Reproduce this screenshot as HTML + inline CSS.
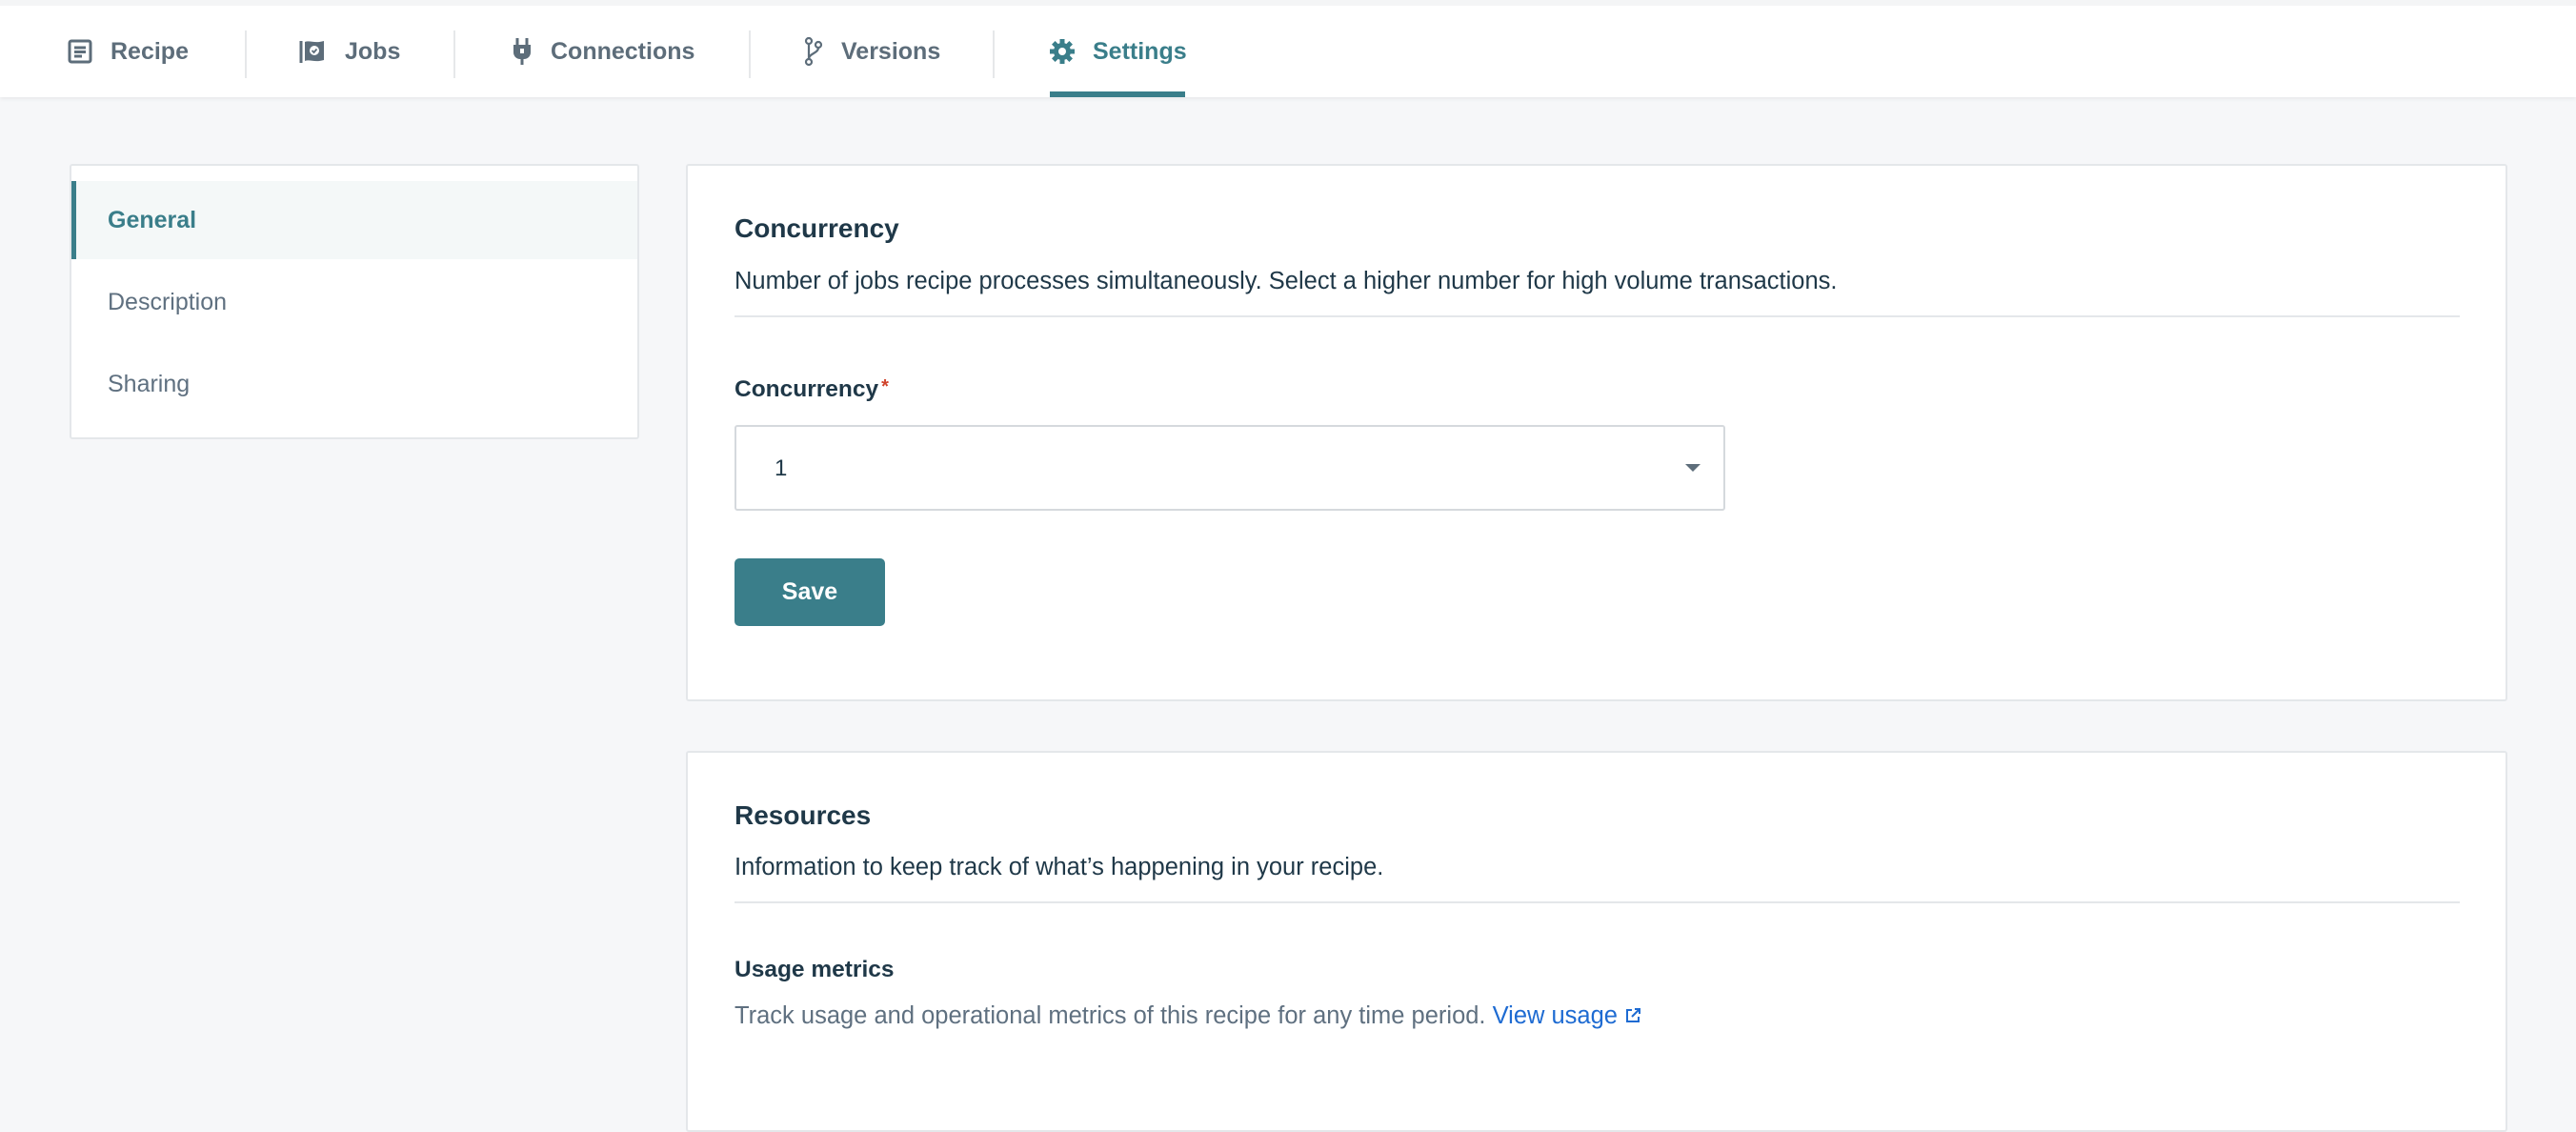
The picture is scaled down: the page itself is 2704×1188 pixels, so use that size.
<!DOCTYPE html>
<html><head><meta charset="utf-8"><style>
*{box-sizing:border-box;margin:0;padding:0}
body{width:2704px;height:1154px;overflow:hidden;background:#f6f7f9;font-family:"Liberation Sans",sans-serif;color:#1f3848;position:relative}
.nav{position:absolute;left:0;top:0;width:2704px;height:102px;background:#fff;box-shadow:0 2px 4px rgba(0,0,0,.06);border-top:6px solid #f4f5f6}
.ni{position:absolute;top:0;height:96px;display:flex;align-items:center;font-size:25px;font-weight:bold;color:#5d6d7a}
.ni svg{margin-right:18px}
.div{position:absolute;top:26px;width:2px;height:50px;background:#e6e8ea}
.ul{position:absolute;left:1102px;top:90px;width:142px;height:6px;background:#3a7e8a}
.side{position:absolute;left:73px;top:172px;width:598px;height:289px;background:#fff;border:2px solid #e4e7ea;border-radius:3px}
.si{position:absolute;left:0;width:594px;height:82px;line-height:82px;padding-left:38px;font-size:25px;color:#5f7080}
.card{position:absolute;left:720px;width:1912px;background:#fff;border:2px solid #e4e7ea;border-radius:3px}
.h{position:absolute;left:49px;font-size:28px;font-weight:bold;color:#1f3848}
.t{position:absolute;left:49px;font-size:25.5px;color:#1f3848;white-space:nowrap}
.hr{position:absolute;left:49px;width:1811px;height:2px;background:#e4e7ea}
</style></head><body>
<div class="nav">
 <div class="ni" style="left:70px"><svg width="28" height="28" viewBox="0 0 28 28"><rect x="3" y="3" width="22" height="22" rx="2" fill="none" stroke="#5d6d7a" stroke-width="3"/><path d="M8 10h12M8 14.5h12M8 19h8" stroke="#5d6d7a" stroke-width="3"/></svg>Recipe</div>
 <div class="div" style="left:257px"></div>
 <div class="ni" style="left:314px"><svg width="30" height="28" viewBox="0 0 30 28"><path d="M2 3v23" stroke="#5d6d7a" stroke-width="3"/><path d="M6 4c6-2 10 2 20-1v20c-10 3-14-1-20 1z" fill="#5d6d7a"/><circle cx="16" cy="13" r="5" fill="#fff"/><path d="M13.5 13l2 2 3-3.5" stroke="#5d6d7a" stroke-width="1.8" fill="none"/></svg>Jobs</div>
 <div class="div" style="left:476px"></div>
 <div class="ni" style="left:536px"><svg width="24" height="30" viewBox="0 0 24 30"><path d="M7 1v7M17 1v7" stroke="#5d6d7a" stroke-width="3"/><path d="M3 8h18v8a7 7 0 0 1-7 7h-4a7 7 0 0 1-7-7z" fill="#5d6d7a"/><rect x="10" y="12" width="4" height="5" fill="#fff"/><path d="M12 23v6" stroke="#5d6d7a" stroke-width="3"/></svg>Connections</div>
 <div class="div" style="left:786px"></div>
 <div class="ni" style="left:843px"><svg width="22" height="32" viewBox="0 0 22 32"><circle cx="6" cy="5" r="3" fill="none" stroke="#5d6d7a" stroke-width="2.2"/><circle cx="16" cy="9" r="3" fill="none" stroke="#5d6d7a" stroke-width="2.2"/><circle cx="6" cy="27" r="3" fill="none" stroke="#5d6d7a" stroke-width="2.2"/><path d="M6 8v16M16 12c0 6-10 6-10 12" fill="none" stroke="#5d6d7a" stroke-width="2.2"/></svg>Versions</div>
 <div class="div" style="left:1042px"></div>
 <div class="ni" style="left:1101px;color:#3a7e8a"><svg width="28" height="28" viewBox="0 0 28 28"><g fill="#3a7e8a"><circle cx="14" cy="14" r="9"/><g stroke="#3a7e8a" stroke-width="5"><path d="M14 1v26M1 14h26M4.8 4.8l18.4 18.4M23.2 4.8L4.8 23.2"/></g></g><circle cx="14" cy="14" r="4" fill="#fff"/></svg>Settings</div>
 <div class="ul"></div>
</div>
<div class="side">
 <div class="si" style="top:16px;background:#f4f8f8;color:#3a7e8a;font-weight:bold;border-left:5px solid #3a7e8a;padding-left:33px">General</div>
 <div class="si" style="top:102px">Description</div>
 <div class="si" style="top:188px">Sharing</div>
</div>
<div class="card" style="top:172px;height:564px">
 <div class="h" style="top:50px">Concurrency</div>
 <div class="t" style="top:107px">Number of jobs recipe processes simultaneously. Select a higher number for high volume transactions.</div>
 <div class="hr" style="top:157px"></div>
 <div class="t" style="top:221px;font-weight:bold;font-size:24.5px">Concurrency<span style="color:#d0432b;font-size:20px;vertical-align:top;margin-left:3px">*</span></div>
 <div style="position:absolute;left:49px;top:272px;width:1040px;height:90px;border:2px solid #d5d9dd;border-radius:3px"><span style="position:absolute;left:40px;top:30px;font-size:24px">1</span><span style="position:absolute;right:24px;top:39px;width:0;height:0;border-left:8px solid transparent;border-right:8px solid transparent;border-top:8px solid #5d6d7a"></span></div>
 <div style="position:absolute;left:49px;top:412px;width:158px;height:71px;background:#3a7e8a;border-radius:5px;color:#fff;font-weight:bold;font-size:25px;text-align:center;line-height:71px">Save</div>
</div>
<div class="card" style="top:788px;height:400px">
 <div class="h" style="top:50px">Resources</div>
 <div class="t" style="top:106px">Information to keep track of what’s happening in your recipe.</div>
 <div class="hr" style="top:156px"></div>
 <div class="t" style="top:214px;font-weight:bold;font-size:24.5px">Usage metrics</div>
 <div class="t" style="top:262px;color:#5f7080">Track usage and operational metrics of this recipe for any time period. <span style="color:#1e6bd2">View usage <svg width="18" height="18" viewBox="0 0 18 18" style="vertical-align:-1px"><path d="M8 3H3v12h12v-5M11 2h5v5M16 2L8 10" fill="none" stroke="#1e6bd2" stroke-width="2"/></svg></span></div>
</div>
</body></html>
